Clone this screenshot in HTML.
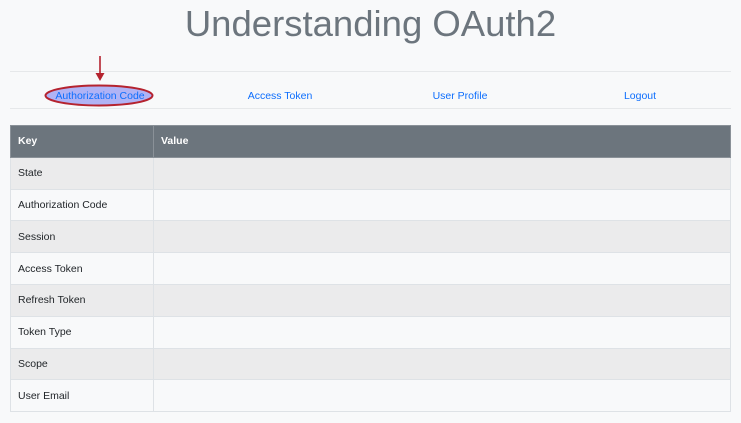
<!DOCTYPE html>
<html><head><style>
body{margin:0;background:#f8f9fa;font-family:"Liberation Sans",sans-serif;width:741px;height:423px;overflow:hidden;position:relative}
h1{position:absolute;top:2px;left:0;width:741px;margin:0;text-align:center;font-weight:400;font-size:36.5px;line-height:44px;color:#6c757d}
.hr{position:absolute;left:10px;width:721px;height:1px;background:#e6e8ea}
.nav{position:absolute;top:89px;font-size:10.5px;color:#0d6efd;line-height:14px;transform:translateX(-50%);white-space:nowrap}
table{position:absolute;left:10px;top:125px;width:721px;border-collapse:collapse;font-size:10.5px;color:#212529}
td,th{height:30.8px;padding:0 7px;text-align:left;border:1px solid #dee2e6}
th{background:#6c757d;color:#fff;font-weight:bold;border-color:#8a9198}
tr:nth-child(even) td{background:#ebebec}
tr:nth-child(odd) td{background:#f8f9fa}
td:first-child,th:first-child{width:128px}
</style></head><body>
<h1>Understanding OAuth2</h1>
<div class="hr" style="top:71px"></div>
<div class="hr" style="top:108px"></div>
<svg style="position:absolute;left:0;top:0" width="741" height="120">
<line x1="100" y1="56" x2="100" y2="76" stroke="#b5232f" stroke-width="1.6"/>
<polygon points="95.5,73 104.5,73 100,81" fill="#b5232f"/>
<ellipse cx="99" cy="95.5" rx="53.5" ry="10" fill="#b0b3f5" stroke="#b5232f" stroke-width="2"/>
</svg>
<div class="nav" style="left:100px">Authorization Code</div>
<div class="nav" style="left:280px">Access Token</div>
<div class="nav" style="left:460px">User Profile</div>
<div class="nav" style="left:640px">Logout</div>
<table>
<tr><th>Key</th><th>Value</th></tr>
<tr><td>State</td><td></td></tr>
<tr><td>Authorization Code</td><td></td></tr>
<tr><td>Session</td><td></td></tr>
<tr><td>Access Token</td><td></td></tr>
<tr><td>Refresh Token</td><td></td></tr>
<tr><td>Token Type</td><td></td></tr>
<tr><td>Scope</td><td></td></tr>
<tr><td>User Email</td><td></td></tr>
</table>
</body></html>
